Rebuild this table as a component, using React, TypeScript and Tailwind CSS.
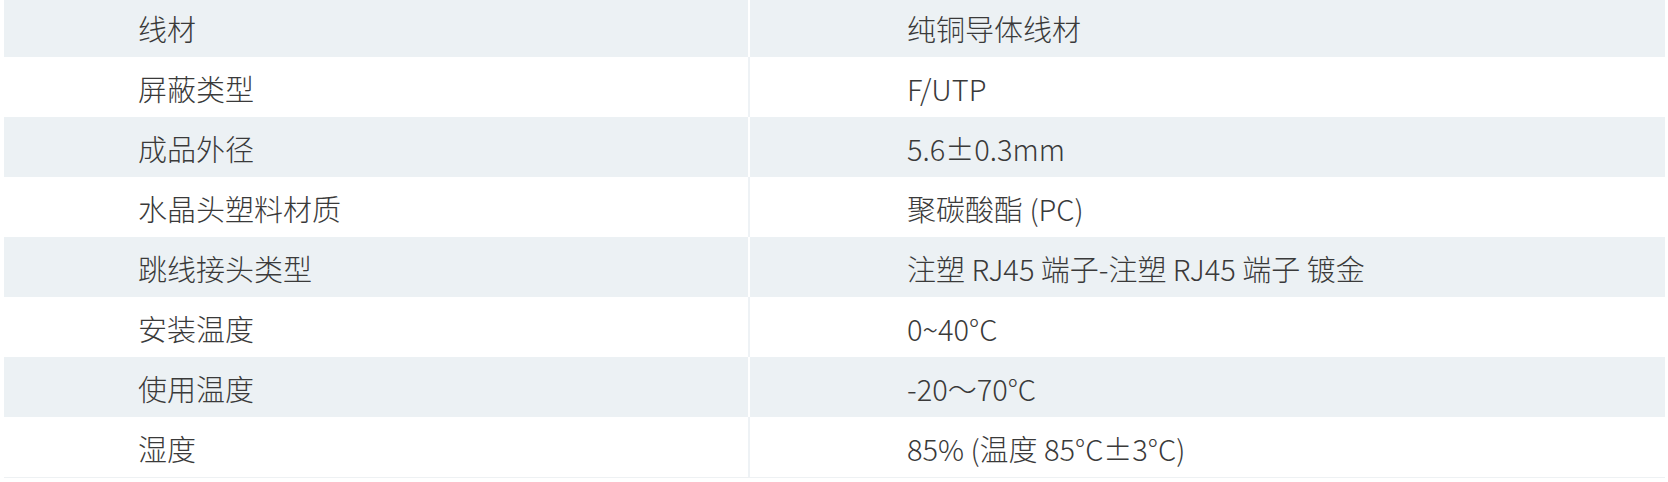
const rows: [string, string][] = [
  ['线材', '纯铜导体线材'],
  ['屏蔽类型', 'F/UTP'],
  ['成品外径', '5.6±0.3mm'],
  ['水晶头塑料材质', '聚碳酸酯 (PC)'],
  ['跳线接头类型', '注塑 RJ45 端子-注塑 RJ45 端子 镀金'],
  ['安装温度', '0~40°C'],
  ['使用温度', '-20～70°C'],
  ['湿度', '85% (温度 85°C±3°C)'],
];

export default function App() {
  return (
    <div className="w-[1668px] h-[482px] bg-white overflow-hidden">
      <div className="ml-[4px] mr-[3px] -mt-[3px] flex flex-col font-['Noto_Sans_CJK_SC',sans-serif] font-light text-[29px] text-[#3a3a3a]">
        {rows.map(([label, value], i) => {
          const shaded = i % 2 === 0;
          return (
            <div key={label} className={`flex h-[60px] ${shaded ? 'bg-[#ecf1f4]' : 'bg-white'}`}>
              <div className="w-[744px] flex items-center pl-[134px] pt-[4px]">{label}</div>
              <div className={`w-[2px] ${shaded ? 'bg-white' : 'bg-[#eef2f5]'}`} />
              <div className="flex-1 flex items-center pl-[157px] pt-[4px]">{value}</div>
            </div>
          );
        })}
        <div className="h-px bg-[#eef1f3]" />
      </div>
    </div>
  );
}
